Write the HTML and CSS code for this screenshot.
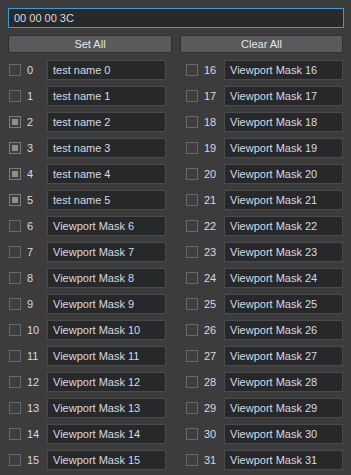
FILE: index.html
```html
<!DOCTYPE html>
<html lang="en">
<head>
    <meta charset="UTF-8">
    <title>Viewport Mask</title>
    <link rel="stylesheet" href="styles.css">
</head>
<body>

<div id="mask-editor">
    <input type="text" id="mask-value" value="00 00 00 3C" />

    <div id="mask-buttons">
        <button>Set All</button>
        <button>Clear All</button>
    </div>

    <div id="mask-list">
        <div class="mask-col">
            <div class="mask-row"><span class="check"></span><span class="num">0</span><div class="name">test name 0</div></div>
            <div class="mask-row"><span class="check"></span><span class="num">1</span><div class="name">test name 1</div></div>
            <div class="mask-row"><span class="check on"></span><span class="num">2</span><div class="name">test name 2</div></div>
            <div class="mask-row"><span class="check on"></span><span class="num">3</span><div class="name">test name 3</div></div>
            <div class="mask-row"><span class="check on"></span><span class="num">4</span><div class="name">test name 4</div></div>
            <div class="mask-row"><span class="check on"></span><span class="num">5</span><div class="name">test name 5</div></div>
            <div class="mask-row"><span class="check"></span><span class="num">6</span><div class="name">Viewport Mask 6</div></div>
            <div class="mask-row"><span class="check"></span><span class="num">7</span><div class="name">Viewport Mask 7</div></div>
            <div class="mask-row"><span class="check"></span><span class="num">8</span><div class="name">Viewport Mask 8</div></div>
            <div class="mask-row"><span class="check"></span><span class="num">9</span><div class="name">Viewport Mask 9</div></div>
            <div class="mask-row"><span class="check"></span><span class="num">10</span><div class="name">Viewport Mask 10</div></div>
            <div class="mask-row"><span class="check"></span><span class="num">11</span><div class="name">Viewport Mask 11</div></div>
            <div class="mask-row"><span class="check"></span><span class="num">12</span><div class="name">Viewport Mask 12</div></div>
            <div class="mask-row"><span class="check"></span><span class="num">13</span><div class="name">Viewport Mask 13</div></div>
            <div class="mask-row"><span class="check"></span><span class="num">14</span><div class="name">Viewport Mask 14</div></div>
            <div class="mask-row"><span class="check"></span><span class="num">15</span><div class="name">Viewport Mask 15</div></div>
        </div>
        <div class="mask-col">
            <div class="mask-row"><span class="check"></span><span class="num">16</span><div class="name">Viewport Mask 16</div></div>
            <div class="mask-row"><span class="check"></span><span class="num">17</span><div class="name">Viewport Mask 17</div></div>
            <div class="mask-row"><span class="check"></span><span class="num">18</span><div class="name">Viewport Mask 18</div></div>
            <div class="mask-row"><span class="check"></span><span class="num">19</span><div class="name">Viewport Mask 19</div></div>
            <div class="mask-row"><span class="check"></span><span class="num">20</span><div class="name">Viewport Mask 20</div></div>
            <div class="mask-row"><span class="check"></span><span class="num">21</span><div class="name">Viewport Mask 21</div></div>
            <div class="mask-row"><span class="check"></span><span class="num">22</span><div class="name">Viewport Mask 22</div></div>
            <div class="mask-row"><span class="check"></span><span class="num">23</span><div class="name">Viewport Mask 23</div></div>
            <div class="mask-row"><span class="check"></span><span class="num">24</span><div class="name">Viewport Mask 24</div></div>
            <div class="mask-row"><span class="check"></span><span class="num">25</span><div class="name">Viewport Mask 25</div></div>
            <div class="mask-row"><span class="check"></span><span class="num">26</span><div class="name">Viewport Mask 26</div></div>
            <div class="mask-row"><span class="check"></span><span class="num">27</span><div class="name">Viewport Mask 27</div></div>
            <div class="mask-row"><span class="check"></span><span class="num">28</span><div class="name">Viewport Mask 28</div></div>
            <div class="mask-row"><span class="check"></span><span class="num">29</span><div class="name">Viewport Mask 29</div></div>
            <div class="mask-row"><span class="check"></span><span class="num">30</span><div class="name">Viewport Mask 30</div></div>
            <div class="mask-row"><span class="check"></span><span class="num">31</span><div class="name">Viewport Mask 31</div></div>
        </div>
    </div>
</div>

</body>
</html>
```

FILE: styles.css
```css
* {
    box-sizing: border-box;
    font-family: 'Liberation Sans', Arial, sans-serif;
    font-size: 11px;
}

body {
    margin: 0;
    padding: 0;
    background-color: #3c3c3c;
    color: #d6dae2;
    height: 475px;
    overflow: hidden;
}

#mask-editor {
    padding: 8px 7px 0 8px;
}

#mask-value {
    display: block;
    width: 336px;
    height: 20px;
    margin: 0;
    padding: 0 5px;
    background-color: #28292b;
    border: 1px solid #3a9ad4;
    color: #d6dae2;
    outline: none;
}

#mask-buttons {
    display: flex;
    gap: 8px;
    margin-top: 7px;
}
#mask-buttons > button {
    width: 164px;
    height: 18px;
    padding: 0;
    background-color: #5a5a5c;
    border: 1px solid #2f2f30;
    border-radius: 2px;
    color: #e2e4e8;
}
#mask-buttons > button + button {
    width: 163px;
}

#mask-list {
    display: flex;
    gap: 20px;
    margin-top: 7px;
    padding-left: 1px;
}

.mask-col {
    display: flex;
    flex-direction: column;
    gap: 6px;
    width: 157px;
}

.mask-row {
    display: flex;
    align-items: center;
    height: 20px;
}

.check {
    width: 12px;
    height: 12px;
    border: 1px solid #676767;
    background-color: #3e3e3e;
    padding: 2px;
}
.check.on {
    border-color: #7c7c7c;
}
.check.on::after {
    content: '';
    display: block;
    width: 6px;
    height: 6px;
    background-color: #8e8e8e;
}

.num {
    width: 26px;
    padding-left: 6px;
}

.name {
    width: 119px;
    height: 20px;
    line-height: 18px;
    padding: 0 5px;
    background-color: #27282a;
    border: 1px solid #4a4a4a;
}
```
